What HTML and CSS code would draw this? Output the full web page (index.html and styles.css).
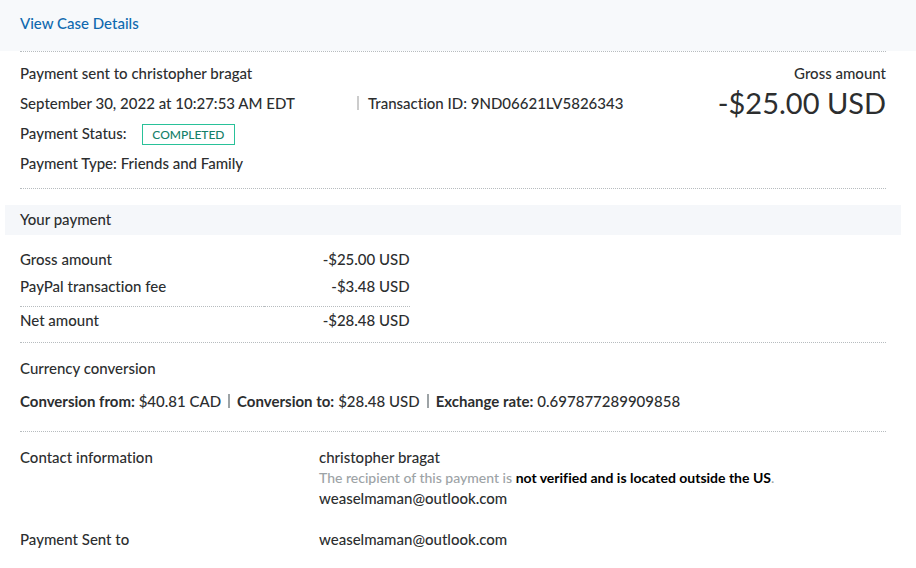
FILE: index.html
```
<!DOCTYPE html>
<html lang="en">
<head>
    <meta charset="UTF-8">
    <meta name="viewport" content="width=device-width, initial-scale=1.0">
    <title>Transaction details</title>
    <link rel="stylesheet" href="styles.css">
</head>
<body>
    <header class="case-bar">
        <a href="#">View Case Details</a>
    </header>

    <main class="details">
        <section class="section summary">
            <div class="summary-info">
                <p>Payment sent to christopher bragat</p>
                <p class="date-row">
                    <span class="date">September 30, 2022 at 10:27:53 AM EDT</span>
                    <span class="transaction-id">Transaction ID: 9ND06621LV5826343</span>
                </p>
                <p>Payment Status: <span class="status">COMPLETED</span></p>
                <p>Payment Type: Friends and Family</p>
            </div>
            <div class="summary-amount">
                <p>Gross amount</p>
                <p class="amount">-$25.00 USD</p>
            </div>
        </section>

        <h2 class="band">Your payment</h2>

        <section class="section payment">
            <table class="payment-table">
                <tbody>
                    <tr>
                        <th scope="row">Gross amount</th>
                        <td>-$25.00 USD</td>
                    </tr>
                    <tr>
                        <th scope="row">PayPal transaction fee</th>
                        <td>-$3.48 USD</td>
                    </tr>
                </tbody>
                <tfoot>
                    <tr>
                        <th scope="row">Net amount</th>
                        <td>-$28.48 USD</td>
                    </tr>
                </tfoot>
            </table>
        </section>

        <section class="section conversion">
            <h2>Currency conversion</h2>
            <ul class="conversion-list">
                <li><strong>Conversion from:</strong> $40.81 CAD</li>
                <li><strong>Conversion to:</strong> $28.48 USD</li>
                <li><strong>Exchange rate:</strong> 0.697877289909858</li>
            </ul>
        </section>

        <dl class="section contact">
            <dt>Contact information</dt>
            <dd>
                <p>christopher bragat</p>
                <p class="note">The recipient of this payment is <strong>not verified and is located outside the US</strong>.</p>
                <p>weaselmaman@outlook.com</p>
            </dd>
            <dt>Payment Sent to</dt>
            <dd>weaselmaman@outlook.com</dd>
        </dl>
    </main>
</body>
</html>
```
FILE: styles.css
```
body {
    margin: 0;
    font-family: Lato, "Noto Sans", sans-serif;
    font-size: 15px;
    font-weight: 500;
    font-variant-ligatures: none;
    line-height: 20px;
    color: #2c2e2f;
    background-color: #fff;
}

h2, p, ul, dl, dd {
    margin: 0;
    padding: 0;
}

h2 {
    font-size: 15px;
    font-weight: 500;
}

.case-bar {
    padding: 13px 20px 18px;
    background-color: #f7f9fb;
}

.case-bar a {
    color: #0f69af;
    text-decoration: none;
}

.details {
    padding: 0 15px 0 5px;
}

.section {
    margin: 0 15px;
    border-top: 1px dotted #b7bcbf;
}

/* Summary */
.summary {
    display: flex;
    justify-content: space-between;
    padding: 6px 0 10px;
    line-height: 30px;
    border-bottom: 1px dotted #b7bcbf;
}

.date-row {
    display: flex;
}

.date {
    width: 337px;
}

.transaction-id {
    display: flex;
    align-items: center;
}

.transaction-id::before {
    content: "";
    width: 2px;
    height: 14px;
    margin-right: 9px;
    background-color: #ccc;
}

.status {
    display: inline-block;
    margin-left: 12px;
    padding: 0 9px;
    border: 1px solid #29c199;
    color: #148069;
    font-size: 12px;
    line-height: 19px;
}

.summary-amount {
    text-align: right;
}

.amount {
    font-size: 29px;
    font-weight: 400;
}

/* Payment */
.band {
    margin-top: 16px;
    padding: 4px 15px 6px;
    background-color: #f5f7fa;
}

.payment {
    padding: 12px 0 10px;
    border-top: none;
}

.payment-table {
    width: 45%;
    border-collapse: collapse;
}

.payment-table th,
.payment-table td {
    padding: 2px 0 5px;
    font-weight: 500;
    text-align: left;
}

.payment-table td {
    text-align: right;
}

.payment-table tbody tr:last-child > * {
    padding-bottom: 10px;
}

.payment-table tfoot tr {
    border-top: 1px dotted #b7bcbf;
}

.payment-table tfoot tr > * {
    padding: 3px 0 2px;
}

/* Currency conversion */
.conversion {
    padding: 15px 0 20px;
}

.conversion-list {
    display: flex;
    margin-top: 13px;
    list-style: none;
}

.conversion-list li + li {
    display: flex;
    align-items: center;
    gap: 4px;
}

.conversion-list li + li::before {
    content: "";
    width: 2px;
    height: 14px;
    margin: 0 3px 0 7px;
    background-color: #9da3a6;
}

.conversion strong,
.note strong {
    font-weight: 700;
}

/* Contact */
.contact {
    display: grid;
    grid-template-columns: 299px 1fr;
    row-gap: 21px;
    padding: 15px 0 20px;
}

.note {
    margin-top: 1px;
    font-size: 14px;
    color: #9da3a6;
}

.note strong {
    color: #000;
}
```
